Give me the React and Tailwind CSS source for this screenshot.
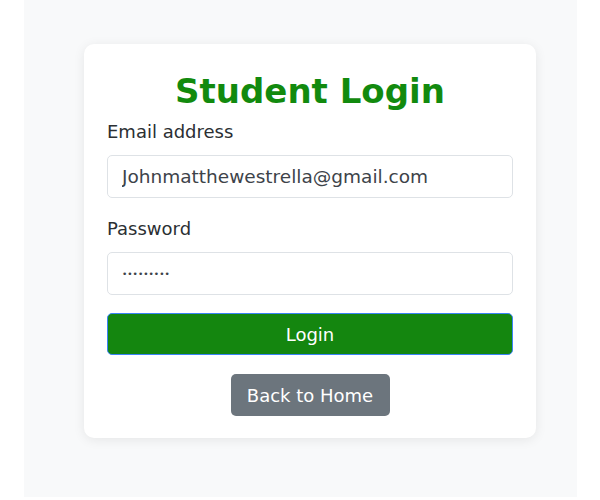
import React, { useState } from "react";

export default function App() {
  const [email, setEmail] = useState("Johnmatthewestrella@gmail.com");
  const [password, setPassword] = useState("123456789");

  return (
    <div className="w-[600px] h-[500px] bg-white" style={{ fontFamily: '"DejaVu Sans", sans-serif' }}>
      <div className="ml-[24px] w-[553px] h-[497px] bg-[#f8f9fa] pt-[44px]">
        {/* Card */}
        <div className="ml-[60px] w-[452px] h-[394px] bg-white rounded-[10px] shadow-[0_2px_12px_rgba(0,0,0,0.08)] px-[23px] pt-[25px]">
          <h2 className="text-center text-[34px] leading-[44px] font-bold text-[#128a0e] mb-[6px]">
            Student Login
          </h2>

          <label className="block text-[18px] leading-[26px] text-[#2b2f33] mb-[10px]">
            Email address
          </label>
          <input
            type="email"
            value={email}
            onChange={(e) => setEmail(e.target.value)}
            className="block w-full h-[43px] px-[14px] border border-[#dee2e6] rounded-[5px] text-[18.5px] text-[#3d4349] outline-none"
          />

          <label className="block mt-[18px] text-[18px] leading-[26px] text-[#2b2f33] mb-[10px]">
            Password
          </label>
          <input
            type="password"
            value={password}
            onChange={(e) => setPassword(e.target.value)}
            className="block w-full h-[43px] px-[14px] border border-[#dee2e6] rounded-[5px] text-[9px] text-[#3d4349] outline-none"
          />

          <button className="block mt-[18px] w-full h-[42px] bg-[#14860f] border border-[#3b82f6] rounded-[5px] text-white text-[18px]">
            Login
          </button>

          <div className="flex justify-center mt-[19px]">
            <button className="w-[159px] h-[42px] bg-[#6c757d] rounded-[5px] text-white text-[18px]">
              Back to Home
            </button>
          </div>
        </div>
      </div>
    </div>
  );
}
